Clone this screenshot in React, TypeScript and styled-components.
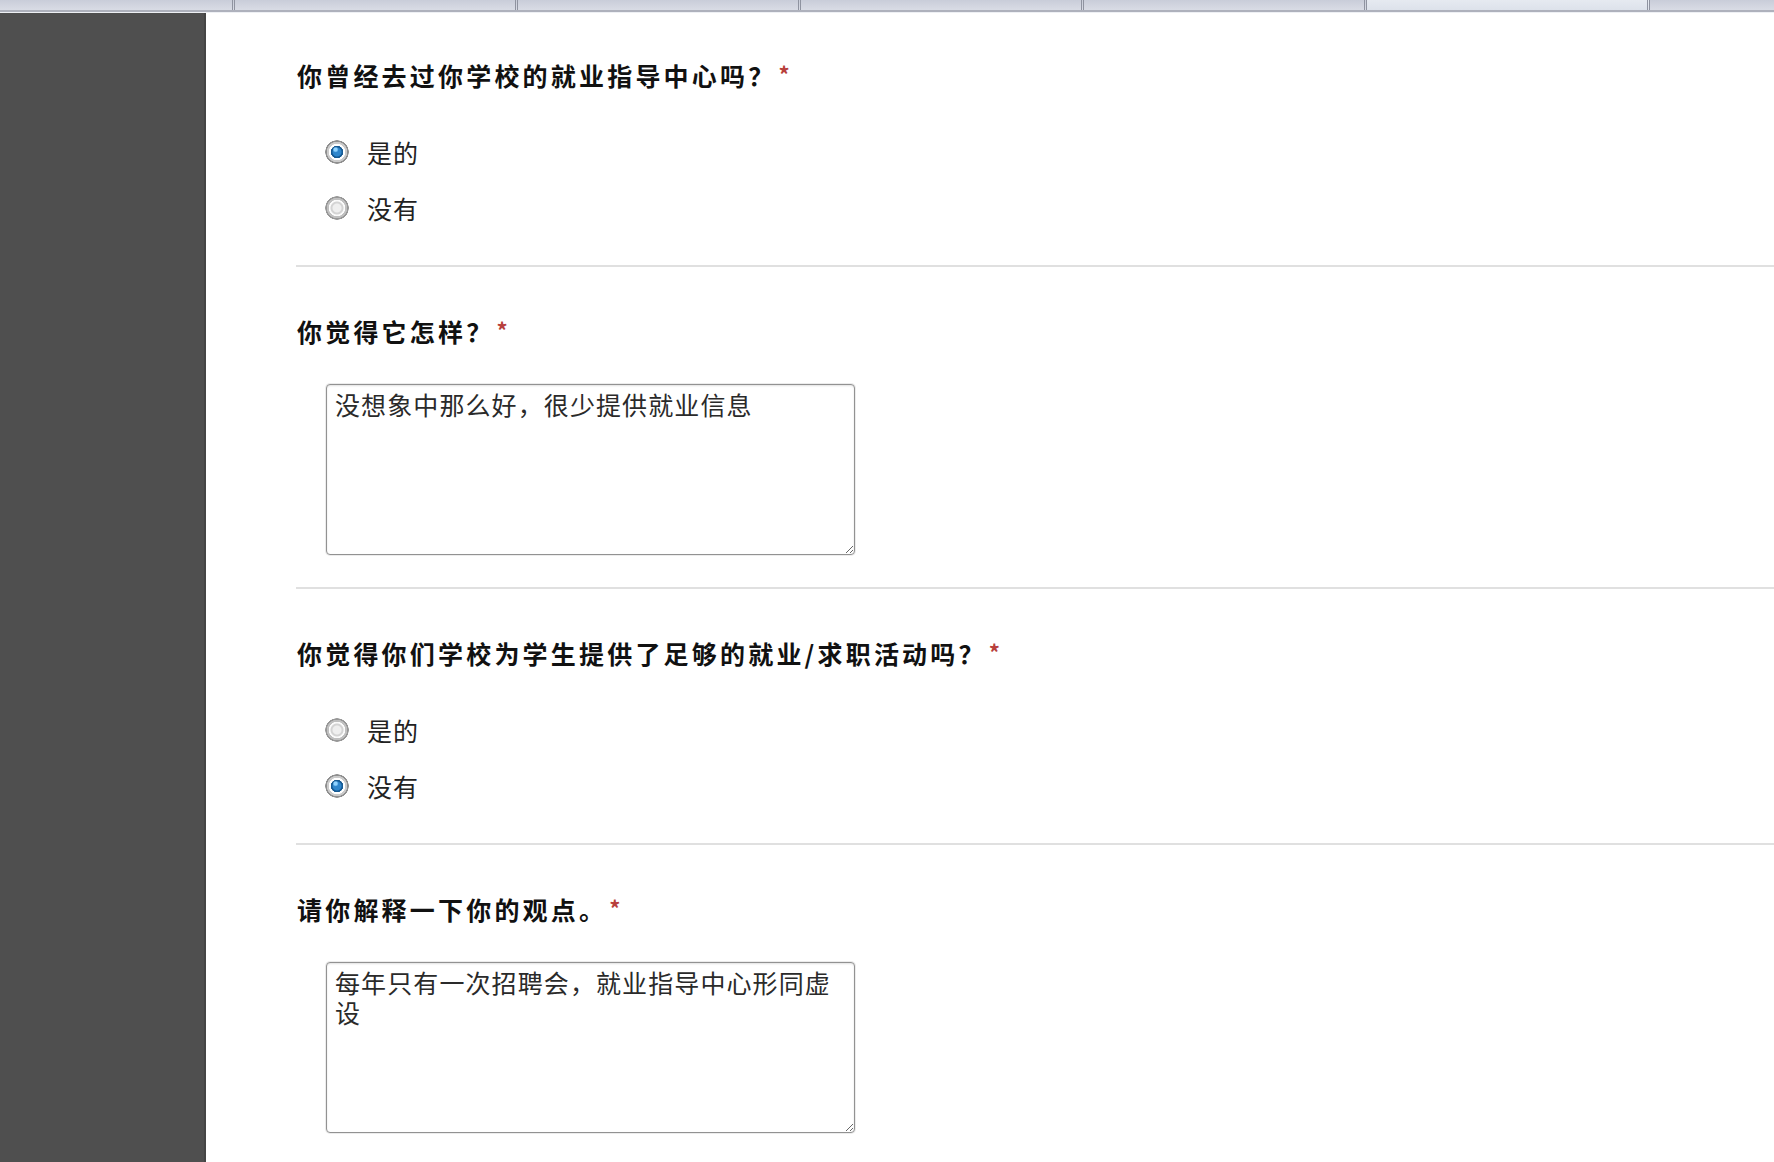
import styled, { createGlobalStyle } from 'styled-components'

const GlobalStyle = createGlobalStyle`
  html, body {
    margin: 0;
    padding: 0;
    background: #ffffff;
  }
  body {
    font-family: "Noto Sans CJK SC", "Noto Sans", sans-serif;
  }
`

type Question =
  | { kind: 'radio'; title: string; options: string[]; selected: number }
  | { kind: 'text'; title: string; answer: string }

const questions: Question[] = [
  { kind: 'radio', title: '你曾经去过你学校的就业指导中心吗？', options: ['是的', '没有'], selected: 0 },
  { kind: 'text', title: '你觉得它怎样？', answer: '没想象中那么好，很少提供就业信息' },
  { kind: 'radio', title: '你觉得你们学校为学生提供了足够的就业/求职活动吗？', options: ['是的', '没有'], selected: 1 },
  { kind: 'text', title: '请你解释一下你的观点。', answer: '每年只有一次招聘会，就业指导中心形同虚设' },
]

const tabs = [235, 283, 283, 283, 283, 283]
const activeTab = 5

const App = () => {
  return (
    <>
      <GlobalStyle />
      <Page>
        <TabStrip>
          {tabs.map((w, idx) => (
            <Tab key={idx} $active={idx === activeTab} style={{ width: w }} />
          ))}
          <TabRest />
        </TabStrip>
        <Body>
          <Sidebar />
          <Main>
            {questions.map((q, qi) => (
              <QuestionBlock key={qi}>
                <Title>
                  {q.title}
                  <Required>*</Required>
                </Title>
                {q.kind === 'radio' ? (
                  <Options>
                    {q.options.map((opt, oi) => (
                      <OptionRow key={oi}>
                        <Radio type="radio" name={`q${qi}`} defaultChecked={oi === q.selected} />
                        <OptionLabel>{opt}</OptionLabel>
                      </OptionRow>
                    ))}
                  </Options>
                ) : (
                  <Answer defaultValue={q.answer} />
                )}
              </QuestionBlock>
            ))}
          </Main>
        </Body>
      </Page>
    </>
  )
}

export default App

const Page = styled.div`
  display: flex;
  flex-direction: column;
  width: 100%;
  min-height: 1162px;
`

const TabStrip = styled.div`
  display: flex;
  height: 10px;
  background: #d3d6e0;
  border-bottom: 2px solid #aeb1bc;
  box-shadow: 0 1px 0 #eef0f4;
`

const Tab = styled.div<{ $active?: boolean }>`
  flex-shrink: 0;
  height: 100%;
  box-sizing: border-box;
  background: ${p => (p.$active
    ? 'linear-gradient(#e6eaf1, #dde2eb)'
    : 'linear-gradient(#c9cdd9, #d9dce5)')};
  border-right: 3px double #8f93a0;
`

const TabRest = styled.div`
  flex: 1;
  background: linear-gradient(#c9cdd9, #d9dce5);
`

const Body = styled.div`
  display: flex;
  flex: 1;
  margin-top: 1px;
`

const Sidebar = styled.div`
  width: 204px;
  flex-shrink: 0;
  background: #4f4f4f;
  border-right: 2px solid #454545;
`

const Main = styled.div`
  flex: 1;
  padding-left: 90px;
  background: #ffffff;
`

const QuestionBlock = styled.section`
  display: flex;
  flex-direction: column;
  padding-top: 42px;
  border-bottom: 2px solid #e0e0e0;

  &:first-child {
    padding-top: 40px;
  }
`

const Title = styled.div`
  padding-left: 1px;
  height: 40px;
  line-height: 40px;
  font-size: 25px;
  font-weight: 700;
  letter-spacing: 3.2px;
  color: #111111;
  white-space: nowrap;
`

const Required = styled.span`
  margin-left: 2px;
  font-size: 22px;
  font-weight: 700;
  color: #b8403c;
  vertical-align: 3px;
`

const Options = styled.div`
  display: flex;
  flex-direction: column;
  padding: 31px 0 29px 29px;
`

const OptionRow = styled.label`
  display: flex;
  align-items: center;
  height: 56px;
`

const Radio = styled.input`
  appearance: none;
  margin: 0;
  width: 24px;
  height: 24px;
  border-radius: 50%;
  flex-shrink: 0;
  background: radial-gradient(circle, #efefef 0 4px, #d4d4d4 5px 6px, #fbfbfb 7px 8px, #c0c0c0 8.5px 10px, #979797 10.5px 11.5px, transparent 12px);

  &:checked {
    background:
      radial-gradient(circle at 44% 40%, #8fd3ff 0 1.5px, transparent 3px),
      radial-gradient(circle, #2f86cc 0 4px, #165a93 5px 6px, #ffffff 6.5px 8px, #cbcbcb 8.5px 10px, #8f8f8f 10.5px 11.5px, transparent 12px);
  }
`

const OptionLabel = styled.span`
  margin-left: 18px;
  font-size: 25px;
  letter-spacing: 1px;
  color: #222222;
`

const Answer = styled.textarea`
  margin: 35px 0 32px 30px;
  width: 529px;
  height: 171px;
  box-sizing: border-box;
  padding: 4px 18px 4px 8px;
  border: 1px solid #929292;
  border-radius: 4px;
  box-shadow: inset 0 1px 2px rgba(0, 0, 0, 0.12), 0 0 0 1px #ececec;
  font-family: "Noto Sans CJK SC", "Noto Sans", sans-serif;
  font-size: 25px;
  letter-spacing: 1.1px;
  line-height: 30px;
  color: #2a2a2a;
  background: #ffffff;
  resize: both;
  outline: none;
  overflow: hidden;
`
